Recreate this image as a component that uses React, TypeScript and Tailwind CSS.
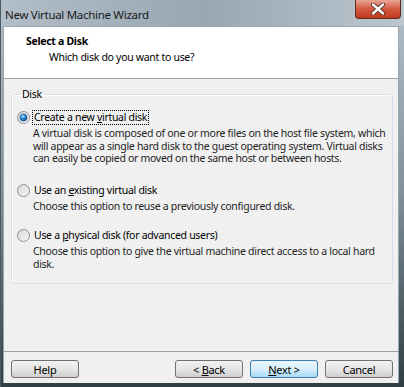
import React from "react";

const font = { fontFamily: '"Noto Sans", "Open Sans", sans-serif' };

function Radio({ checked }: { checked?: boolean }) {
  return (
    <svg width="13" height="13" viewBox="0 0 13 13" className="shrink-0">
      <defs>
        <linearGradient id="rb" x1="0" y1="0" x2="1" y2="1">
          <stop offset="0" stopColor="#d6d6d6" />
          <stop offset="1" stopColor="#f8f8f8" />
        </linearGradient>
        <radialGradient id="dot" cx="0.4" cy="0.35" r="0.7">
          <stop offset="0" stopColor="#a9e3fb" />
          <stop offset="0.45" stopColor="#2b8fd8" />
          <stop offset="1" stopColor="#0b3d7a" />
        </radialGradient>
      </defs>
      <circle cx="6.5" cy="6.5" r="6" fill="url(#rb)" stroke="#8c8e90" strokeWidth="1" />
      {checked && <circle cx="6.5" cy="6.5" r="3.6" fill="url(#dot)" stroke="#1c4f86" strokeWidth="0.6" />}
    </svg>
  );
}

function Btn({ children, primary }: { children: React.ReactNode; primary?: boolean }) {
  return (
    <div
      className={
        "w-[68px] h-[18px] rounded-[3px] border flex items-center justify-center text-[11px] tracking-[-0.3px] text-black " +
        (primary
          ? "border-[#3c7fb1] bg-gradient-to-b from-[#eaf6fd] via-[#d9f0fc] to-[#a7d9f5]"
          : "border-[#707070] bg-gradient-to-b from-[#f2f2f2] via-[#e6e6e6] to-[#cfcfcf]")
      }
    >
      <div className="leading-none">{children}</div>
    </div>
  );
}

export default function App() {
  return (
    <div
      style={font}
      className="w-[404px] h-[387px] overflow-hidden flex flex-col bg-gradient-to-b from-[#b6c1ca] via-[#7f9099] to-[#2e3f45] border-l border-[#4a5a63]"
    >
      {/* Title bar */}
      <div className="h-[26px] shrink-0 flex items-start relative bg-gradient-to-r from-[#b2bec8] via-[#98a7b3] to-[#bcc6ce]">
        <div className="pl-[4px] pt-[7px] text-[11.5px] leading-[16px] tracking-[-0.3px] text-[#1a1a1a]">New Virtual Machine Wizard</div>
        <div className="absolute right-[3px] top-0 w-[46px] h-[19px] rounded-b-[4px] border border-t-0 border-[#5e2a22] bg-gradient-to-b from-[#e9a596] via-[#d2573e] to-[#c13a1e] flex items-center justify-center">
          <svg width="14" height="12" viewBox="0 0 14 12">
            <path d="M2 1.5 L12 10.5 M12 1.5 L2 10.5" stroke="#4a2a24" strokeWidth="4.2" strokeLinecap="round" />
            <path d="M2 1.5 L12 10.5 M12 1.5 L2 10.5" stroke="#ffffff" strokeWidth="2.4" strokeLinecap="round" />
          </svg>
        </div>
      </div>

      {/* Client */}
      <div className="flex-1 ml-[2px] mr-[5px] flex flex-col bg-[#f0f0f0] border border-b-0 border-[#9aa5ad] text-[10.5px] tracking-[-0.3px]">
        <div className="h-[52px] shrink-0 bg-white border-b border-[#a0a0a0] text-black">
          <div className="pl-[22px] pt-[7px] font-bold leading-[14px]">Select a Disk</div>
          <div className="pl-[45px] pt-[2px] leading-[14px]">Which disk do you want to use?</div>
        </div>

        <div className="flex-1 flex flex-col">
          <fieldset className="mt-[9px] ml-[7px] mr-[5px] border border-[#d5dfe5] rounded-[3px] pl-[5px] pr-[3px] pb-[13px] shadow-[inset_1px_1px_0_#ffffff]">
            <legend className="ml-[3px] px-[2px] leading-[13px] text-black">Disk</legend>

            <div className="mt-[9px] flex items-center h-[15px] gap-[2px] text-black">
              <Radio checked />
              <span className="border border-dotted border-black px-[1px] leading-[13px]">
                Create a new <u>v</u>irtual disk
              </span>
            </div>
            <div className="ml-[16px] mt-[2px] leading-[12.5px] text-[#1e1e1e]">
              A virtual disk is composed of one or more files on the host file system, which will appear as a single hard disk to the guest operating system. Virtual disks can easily be copied or moved on the same host or between hosts.
            </div>

            <div className="mt-[18px] flex items-center h-[15px] gap-[2px] text-black">
              <Radio />
              <span className="px-[2px] leading-[13px]">
                Use an <u>e</u>xisting virtual disk
              </span>
            </div>
            <div className="ml-[16px] mt-[2px] leading-[12.5px] text-[#1e1e1e]">
              Choose this option to reuse a previously configured disk.
            </div>

            <div className="mt-[16px] flex items-center h-[15px] gap-[2px] text-black">
              <Radio />
              <span className="px-[2px] leading-[13px]">
                Use a <u>p</u>hysical disk (for advanced users)
              </span>
            </div>
            <div className="ml-[16px] mt-[2px] leading-[12.5px] text-[#1e1e1e] pr-[8px]">
              Choose this option to give the virtual machine direct access to a local hard disk.
            </div>
          </fieldset>

          <div className="flex-1" />

          <div className="border-t border-[#a0a0a0] shadow-[inset_0_1px_0_#ffffff]" />
          <div className="flex items-center pt-[8px] pb-[5px] pl-[7px] pr-[5px]">
            <Btn>Help</Btn>
            <div className="flex-1" />
            <div className="flex gap-[7px]">
              <Btn>&lt; <u>B</u>ack</Btn>
              <Btn primary>
                <u>N</u>ext &gt;
              </Btn>
              <Btn>Cancel</Btn>
            </div>
          </div>
        </div>
      </div>
      <div className="h-[4px] shrink-0" />
    </div>
  );
}
